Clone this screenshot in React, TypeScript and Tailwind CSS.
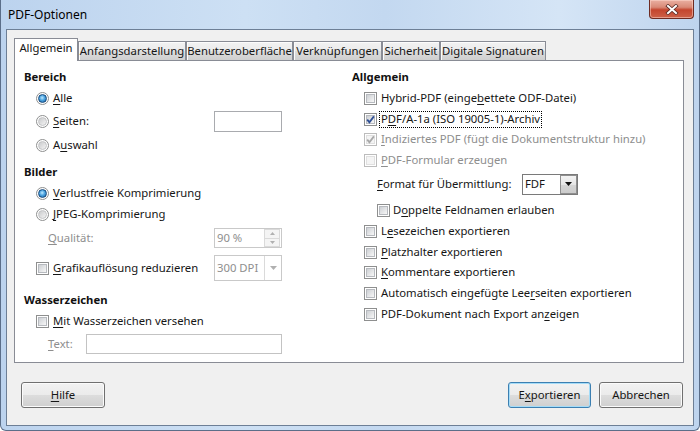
import React from "react";

const FONT = { fontFamily: '"Noto Sans", "Open Sans", sans-serif' };

function U({ c }: { c: string }) {
  return <span className="underline decoration-[1px] underline-offset-[1.5px]">{c}</span>;
}

function Radio({ checked }: { checked?: boolean }) {
  return (
    <span className="w-[13px] h-[13px] shrink-0 rounded-full border border-[#8e8f8f] bg-white flex items-center justify-center">
      {checked ? (
        <span className="w-[9px] h-[9px] rounded-full border border-[#164a7e] bg-[radial-gradient(circle_at_45%_40%,#bfe9ff_0%,#4aa3e0_45%,#1b5f9e_100%)]" />
      ) : (
        <span className="w-[9px] h-[9px] rounded-full bg-[linear-gradient(135deg,#c9cacc,#f4f4f4)] border border-[#c2c3c5]" />
      )}
    </span>
  );
}

function Check({ checked, disabled }: { checked?: boolean; disabled?: boolean }) {
  return (
    <span
      className={`relative w-[13px] h-[13px] shrink-0 border bg-white p-[1px] flex ${
        disabled ? "border-[#bcbcbc]" : "border-[#8e8f8f]"
      }`}
    >
      <span
        className={`flex-1 border ${
          disabled
            ? "border-[#e0e0e0] bg-[#f4f4f4]"
            : "border-[#b7babf] bg-[linear-gradient(135deg,#cdd0d4,#f7f7f7)]"
        }`}
      />
      {checked && (
        <svg className="absolute left-[0px] top-[0px]" width="11" height="11" viewBox="0 0 11 11">
          <path
            d="M2.2 5.6 L4.4 8.2 L8.9 2.4"
            fill="none"
            stroke={disabled ? "#a8a8a8" : "#2f4f94"}
            strokeWidth="1.8"
          />
        </svg>
      )}
    </span>
  );
}

function Heading({ children }: { children: React.ReactNode }) {
  return <div className="h-[20px] flex items-center font-bold text-[#111]">{children}</div>;
}

function Tab({ w, label, active }: { w: string; label: string; active?: boolean }) {
  if (active)
    return (
      <div
        className={`${w} h-[23px] -mb-[1px] bg-white border-l border-t border-r border-[#898c95] flex items-start justify-center pt-[3px] whitespace-nowrap`}
      >
        {label}
      </div>
    );
  return (
    <div
      className={`${w} h-[19px] border-l border-t border-r border-[#898c95] bg-[linear-gradient(to_bottom,#f2f2f2_0%,#ebebeb_50%,#dddddd_51%,#cfcfcf_100%)] shadow-[inset_1px_1px_0_#fcfcfc] flex items-center justify-center whitespace-nowrap`}
    >
      {label}
    </div>
  );
}

function Btn({ w, children, def }: { w: string; children: React.ReactNode; def?: boolean }) {
  return (
    <div
      className={`${w} h-[26px] rounded-[3px] border flex items-center justify-center bg-[linear-gradient(to_bottom,#f2f2f2_0%,#ebebeb_49%,#dddddd_50%,#cfcfcf_100%)] ${
        def
          ? "border-[#3c7fb1] shadow-[inset_0_0_0_1px_#a4dcf8]"
          : "border-[#707070] shadow-[inset_0_0_0_1px_#fbfbfb]"
      }`}
    >
      {children}
    </div>
  );
}

export default function App() {
  const dis = "text-[#8e8e8e]";
  return (
    <div
      className="w-[700px] h-[431px] overflow-hidden text-[11.3px] leading-none text-[#161616]"
      style={FONT}
    >
      <div className="w-[700px] h-[431px] flex flex-col border-x border-b border-[#5b6e89] rounded-b-[6px] bg-[linear-gradient(to_right,#bcd3ee_0%,#cde0f4_35%,#c3d8f0_55%,#d5e5f6_80%,#bed4ee_100%)]">
        {/* title bar */}
        <div className="h-[29px] flex items-start pl-[7px] pr-[5px] shrink-0">
          <div className="h-[29px] flex items-center text-[12px] text-black">PDF-Optionen</div>
          <div className="flex-1" />
          <div className="w-[45px] h-[19px] rounded-b-[4px] border border-t-0 border-[#6e2b22] bg-[linear-gradient(to_bottom,#eab0a2_0%,#d98a77_40%,#c4452e_55%,#cd6148_100%)] shadow-[inset_0_0_0_1px_rgba(255,220,210,0.5)] flex items-center justify-center">
            <svg width="14" height="11" viewBox="0 0 14 11">
              <path d="M3 2 L11 9 M11 2 L3 9" stroke="#5a2a24" strokeWidth="3.6" strokeLinecap="square" />
              <path d="M3 2 L11 9 M11 2 L3 9" stroke="#ffffff" strokeWidth="2" strokeLinecap="square" />
            </svg>
          </div>
        </div>

        {/* client */}
        <div className="mx-[5px] w-[688px] h-[397px] border border-[#6d7f96] bg-[#f0f0f0] pl-[7px] pt-[8px] flex flex-col">
          {/* tabs */}
          <div className="h-[22px] flex items-end relative z-10">
            <Tab w="w-[64px]" label="Allgemein" active />
            <Tab w="w-[108px]" label="Anfangsdarstellung" />
            <Tab w="w-[107px]" label="Benutzeroberfläche" />
            <Tab w="w-[89px]" label="Verknüpfungen" />
            <Tab w="w-[58px]" label="Sicherheit" />
            <Tab w="w-[106px]" label="Digitale Signaturen" />
          </div>

          {/* panel */}
          <div className="w-[670px] h-[303px] border border-[#898c95] bg-white pt-[6px] pl-[9px] flex">
            {/* left column */}
            <div className="w-[328px] flex flex-col">
              <Heading>Bereich</Heading>
              <div className="mt-[1px] h-[20px] flex items-center pl-[12px] gap-[4px]">
                <Radio checked />
                <span>
                  <U c="A" />lle
                </span>
              </div>
              <div className="mt-[3px] h-[20px] flex items-center">
                <div className="w-[190px] flex items-center pl-[12px] gap-[4px]">
                  <Radio />
                  <span>
                    <U c="S" />eiten:
                  </span>
                </div>
                <div className="w-[68px] h-[21px] border border-[#a9abaf] bg-white" />
              </div>
              <div className="mt-[4px] h-[20px] flex items-center pl-[12px] gap-[4px]">
                <Radio />
                <span>
                  A<U c="u" />swahl
                </span>
              </div>

              <div className="mt-[7px]">
                <Heading>Bilder</Heading>
              </div>
              <div className="mt-[1px] h-[20px] flex items-center pl-[12px] gap-[4px]">
                <Radio checked />
                <span>
                  <U c="V" />erlustfreie Komprimierung
                </span>
              </div>
              <div className="mt-[1px] h-[20px] flex items-center pl-[12px] gap-[4px]">
                <Radio />
                <span>
                  <U c="J" />PEG-Komprimierung
                </span>
              </div>
              <div className="mt-[4px] h-[20px] flex items-center">
                <div className={`w-[190px] pl-[24px] ${dis}`}>
                  <U c="Q" />ualität:
                </div>
                <div className="w-[68px] h-[20px] border border-[#c9c9c9] bg-white flex items-center">
                  <span className={`flex-1 pl-[2px] ${dis}`}>90 %</span>
                  <div className="w-[16px] h-[18px] flex flex-col mr-[1px] gap-[0px]">
                    <div className="flex-1 border border-[#dadada] bg-[#f4f4f4] flex items-center justify-center">
                      <svg width="5" height="3" viewBox="0 0 5 3">
                        <path d="M0 3 L2.5 0 L5 3 Z" fill="#b0b0b0" />
                      </svg>
                    </div>
                    <div className="flex-1 border border-t-0 border-[#dadada] bg-[#f4f4f4] flex items-center justify-center">
                      <svg width="5" height="3" viewBox="0 0 5 3">
                        <path d="M0 0 L2.5 3 L5 0 Z" fill="#b0b0b0" />
                      </svg>
                    </div>
                  </div>
                </div>
              </div>
              <div className="mt-[10px] h-[20px] flex items-center">
                <div className="w-[190px] flex items-center pl-[12px] gap-[4px]">
                  <Check />
                  <span>
                    <U c="G" />rafikauflösung reduzieren
                  </span>
                </div>
                <div className="w-[68px] h-[26px] shrink-0 border border-[#c9c9c9] bg-white flex items-center">
                  <span className={`flex-1 pl-[2px] ${dis}`}>300 DPI</span>
                  <div className="w-[17px] h-[24px] border-l border-[#dadada] flex items-center justify-center">
                    <svg width="7" height="4" viewBox="0 0 7 4">
                      <path d="M0 0 L3.5 4 L7 0 Z" fill="#b0b0b0" />
                    </svg>
                  </div>
                </div>
              </div>

              <div className="mt-[12px]">
                <Heading>Wasserzeichen</Heading>
              </div>
              <div className="mt-[1px] h-[20px] flex items-center pl-[12px] gap-[4px]">
                <Check />
                <span>
                  <U c="M" />it Wasserzeichen versehen
                </span>
              </div>
              <div className="mt-[3px] h-[20px] flex items-center">
                <div className={`w-[62px] pl-[24px] ${dis}`}>
                  <U c="T" />ext:
                </div>
                <div className="w-[196px] h-[20px] border border-[#c3c3c3] bg-white" />
              </div>
            </div>

            {/* right column */}
            <div className="flex-1 flex flex-col">
              <Heading>Allgemein</Heading>
              <div className="mt-[1px] h-[20px] flex items-center pl-[12px] gap-[4px]">
                <Check />
                <span>
                  Hybrid-PDF (einge<U c="b" />ettete ODF-Datei)
                </span>
              </div>
              <div className="mt-[1px] h-[20px] flex items-center pl-[12px]">
                <Check checked />
                <span className="ml-[2px] h-[17px] px-[1px] border border-dotted border-black flex items-center">
                  P<U c="D" />F/A-1a (ISO 19005-1)-Archiv
                </span>
              </div>
              <div className="h-[20px] flex items-center pl-[12px] gap-[4px]">
                <Check checked disabled />
                <span className={dis}>
                  <U c="I" />ndiziertes PDF (fügt die Dokumentstruktur hinzu)
                </span>
              </div>
              <div className="mt-[1px] h-[20px] flex items-center pl-[12px] gap-[4px]">
                <Check disabled />
                <span className={dis}>
                  <U c="P" />DF-Formular erzeugen
                </span>
              </div>
              <div className="mt-[4px] h-[20px] flex items-center pl-[25px]">
                <div className="w-[145px]">
                  <U c="F" />ormat für Übermittlung:
                </div>
                <div className="w-[56px] h-[21px] border border-[#7a7a7a] bg-white flex items-center">
                  <span className="flex-1 pl-[2px]">FDF</span>
                  <div className="w-[17px] h-[19px] border border-[#8f8f8f] bg-[linear-gradient(to_bottom,#f3f3f3_0%,#e6e6e6_50%,#d6d6d6_51%,#cbcbcb_100%)] flex items-center justify-center">
                    <svg width="7" height="4" viewBox="0 0 7 4">
                      <path d="M0 0 L3.5 4 L7 0 Z" fill="#111" />
                    </svg>
                  </div>
                </div>
              </div>
              <div className="mt-[6px] h-[20px] flex items-center pl-[25px] gap-[3px]">
                <Check />
                <span>
                  D<U c="o" />ppelte Feldnamen erlauben
                </span>
              </div>
              <div className="mt-[1px] h-[20px] flex items-center pl-[12px] gap-[4px]">
                <Check />
                <span>
                  L<U c="e" />sezeichen exportieren
                </span>
              </div>
              <div className="mt-[1px] h-[20px] flex items-center pl-[12px] gap-[4px]">
                <Check />
                <span>
                  <U c="P" />latzhalter exportieren
                </span>
              </div>
              <div className="h-[20px] flex items-center pl-[12px] gap-[4px]">
                <Check />
                <span>
                  <U c="K" />ommentare exportieren
                </span>
              </div>
              <div className="mt-[1px] h-[20px] flex items-center pl-[12px] gap-[4px]">
                <Check />
                <span>
                  Automatisch eingefügte Lee<U c="r" />seiten exportieren
                </span>
              </div>
              <div className="mt-[1px] h-[20px] flex items-center pl-[12px] gap-[4px]">
                <Check />
                <span>
                  PDF-Dokument nach Export an<U c="z" />eigen
                </span>
              </div>
            </div>
          </div>

          {/* buttons */}
          <div className="w-[670px] mt-[19px] flex items-center pl-[7px] pr-[1px]">
            <Btn w="w-[84px]">
              <span>
                <U c="H" />ilfe
              </span>
            </Btn>
            <div className="flex-1" />
            <Btn w="w-[83px]" def>
              <span>
                E<U c="x" />portieren
              </span>
            </Btn>
            <div className="w-[8px]" />
            <Btn w="w-[84px]">
              <span>Abbrechen</span>
            </Btn>
          </div>
        </div>
      </div>
    </div>
  );
}
